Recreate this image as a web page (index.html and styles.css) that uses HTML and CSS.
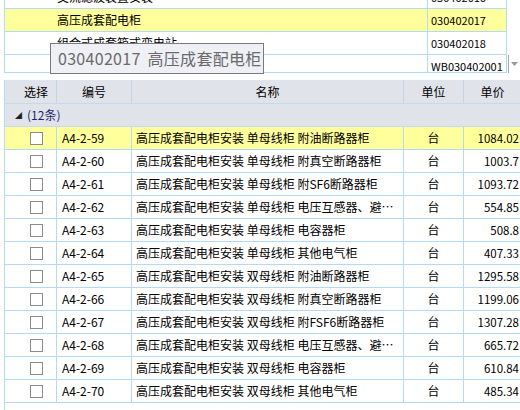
FILE: index.html
```html
<!DOCTYPE html>
<html lang="zh-CN">
<head>
<meta charset="utf-8">
<title>定额选择</title>
<link rel="stylesheet" href="styles.css">
</head>
<body>
<div class="top">
  <div class="list">
    <div class="lrow first"><div class="lname">交流滤波装置安装</div><div class="lcode">030402016</div></div>
    <div class="lrow sel"><div class="lname">高压成套配电柜</div><div class="lcode">030402017</div></div>
    <div class="lrow"><div class="lname">组合式成套箱式变电站</div><div class="lcode">030402018</div></div>
    <div class="lrow"><div class="lname">成套配电柜</div><div class="lcode">WB030402001</div></div>
  </div>
  <div class="side">
    <div class="drop"><svg width="7" height="4" viewBox="0 0 7 4"><path d="M0 0H7L3.5 4Z" fill="#9a9a9a"/></svg></div>
  </div>
  <div class="tip">030402017 高压成套配电柜</div>
</div>

<div class="grid">
  <div class="hrow">
    <div class="c1 hc first">选择</div>
    <div class="c2 hc">编号</div>
    <div class="c3 hc">名称</div>
    <div class="c4 hc">单位</div>
    <div class="c5 hc">单价</div>
  </div>
  <div class="grow"><span class="tri">◢</span><span class="gtext">(12条)</span></div>

  <div class="row sel"><div class="c1"><span class="cb"></span></div><div class="c2">A4-2-59</div><div class="c3">高压成套配电柜安装 单母线柜 附油断路器柜</div><div class="c4">台</div><div class="c5">1084.02</div></div>
  <div class="row"><div class="c1"><span class="cb"></span></div><div class="c2">A4-2-60</div><div class="c3">高压成套配电柜安装 单母线柜 附真空断路器柜</div><div class="c4">台</div><div class="c5">1003.7</div></div>
  <div class="row"><div class="c1"><span class="cb"></span></div><div class="c2">A4-2-61</div><div class="c3">高压成套配电柜安装 单母线柜 附SF6断路器柜</div><div class="c4">台</div><div class="c5">1093.72</div></div>
  <div class="row"><div class="c1"><span class="cb"></span></div><div class="c2">A4-2-62</div><div class="c3">高压成套配电柜安装 单母线柜 电压互感器、避雷器柜</div><div class="c4">台</div><div class="c5">554.85</div></div>
  <div class="row"><div class="c1"><span class="cb"></span></div><div class="c2">A4-2-63</div><div class="c3">高压成套配电柜安装 单母线柜 电容器柜</div><div class="c4">台</div><div class="c5">508.8</div></div>
  <div class="row"><div class="c1"><span class="cb"></span></div><div class="c2">A4-2-64</div><div class="c3">高压成套配电柜安装 单母线柜 其他电气柜</div><div class="c4">台</div><div class="c5">407.33</div></div>
  <div class="row"><div class="c1"><span class="cb"></span></div><div class="c2">A4-2-65</div><div class="c3">高压成套配电柜安装 双母线柜 附油断路器柜</div><div class="c4">台</div><div class="c5">1295.58</div></div>
  <div class="row"><div class="c1"><span class="cb"></span></div><div class="c2">A4-2-66</div><div class="c3">高压成套配电柜安装 双母线柜 附真空断路器柜</div><div class="c4">台</div><div class="c5">1199.06</div></div>
  <div class="row"><div class="c1"><span class="cb"></span></div><div class="c2">A4-2-67</div><div class="c3">高压成套配电柜安装 双母线柜 附FSF6断路器柜</div><div class="c4">台</div><div class="c5">1307.28</div></div>
  <div class="row"><div class="c1"><span class="cb"></span></div><div class="c2">A4-2-68</div><div class="c3">高压成套配电柜安装 双母线柜 电压互感器、避雷器柜</div><div class="c4">台</div><div class="c5">665.72</div></div>
  <div class="row"><div class="c1"><span class="cb"></span></div><div class="c2">A4-2-69</div><div class="c3">高压成套配电柜安装 双母线柜 电容器柜</div><div class="c4">台</div><div class="c5">610.84</div></div>
  <div class="row"><div class="c1"><span class="cb"></span></div><div class="c2">A4-2-70</div><div class="c3">高压成套配电柜安装 双母线柜 其他电气柜</div><div class="c4">台</div><div class="c5">485.34</div></div>
</div>
</body>
</html>
```
FILE: styles.css
```css
* { box-sizing: border-box; }
html, body { margin: 0; padding: 0; }
body {
  width: 520px;
  height: 410px;
  overflow: hidden;
  background: #fff;
  font-family: "Noto Sans CJK SC", "Noto Sans", sans-serif;
  font-size: 12px;
  color: #000;
}

/* top list */
.top {
  position: relative;
  display: flex;
  height: 73px;
}
.list {
  margin-left: 4px;
  width: 503px;
  height: 73px;
  overflow: hidden;
  border-left: 1px solid #b3d9f6;
  border-right: 1px solid #b3d9f6;
  border-bottom: 1px solid #b3d9f6;
}
.lrow {
  display: flex;
  height: 23px;
  line-height: 22px;
  border-bottom: 1px solid #b3d9f6;
}
.lrow.first { margin-top: -14px; }
.lrow.sel { background: #ffff9c; }
.lname {
  width: 423px;
  padding-left: 52px;
  border-right: 1px solid #b3d9f6;
  white-space: nowrap;
  overflow: hidden;
}
.lcode {
  width: 78px;
  padding-left: 3px;
  font-size: 11px;
  white-space: nowrap;
  overflow: hidden;
}
.side {
  display: flex;
  flex-direction: column;
  justify-content: flex-end;
  padding-left: 1px;
}
.drop {
  width: 12px;
  height: 18px;
  border-left: 1px solid #a8a8a8;
  display: flex;
  align-items: center;
  justify-content: center;
}
.tip {
  position: absolute;
  left: 50px;
  top: 43px;
  width: 214px;
  height: 31px;
  background: #eff0f5;
  border: 1px solid #7a7a7a;
  color: #6a6a6a;
  font-size: 16px;
  line-height: 28px;
  padding-left: 7px;
  word-spacing: 3px;
  letter-spacing: 0.3px;
  white-space: nowrap;
  overflow: hidden;
}

/* lower grid */
.grid {
  margin-top: 7px;
  margin-left: 4px;
  width: 540px;
  height: 330px;
  border-left: 1px solid #b3d9f6;
}
.hrow {
  display: flex;
  height: 24px;
  background: #e0e3ea;
  border-bottom: 1px solid #c6d8ea;
}
.hc {
  text-align: center;
  line-height: 23px;
  border-right: 1px solid #c6d5e4;
}
.hc.first { padding-left: 11px; }
.grow {
  height: 23px;
  background: #e0e3ea;
  border-bottom: 1px solid #c6d8ea;
  line-height: 22px;
  display: flex;
  align-items: center;
}
.tri {
  font-size: 7px;
  margin-left: 10px;
  width: 12px;
  line-height: 1;
  color: #222;
}
.gtext { color: #1f1f70; }

.row {
  display: flex;
  height: 23px;
  line-height: 22px;
  border-bottom: 1px solid #b3d9f6;
}
.row.sel { background: #ffff9c; }
.row > div {
  border-right: 1px solid #b3d9f6;
  white-space: nowrap;
  overflow: hidden;
}
.c1 { width: 52px; flex: none; }
.c2 { width: 75px; flex: none; }
.c3 { width: 272px; flex: none; }
.c4 { width: 60px; flex: none; }
.c5 { width: 58px; flex: none; }

.row .c1 {
  display: flex;
  align-items: center;
  padding-left: 25px;
}
.cb {
  width: 13px;
  height: 13px;
  border: 1px solid #8c8c8c;
  background: #fff;
}
.row .c2 { padding-left: 5px; }
.row .c3 { padding-left: 4px; padding-right: 4px; text-overflow: ellipsis; }
.row .c4 { text-align: center; }
.row .c5 { text-align: right; padding-right: 2px; font-size: 11.5px; }
```
